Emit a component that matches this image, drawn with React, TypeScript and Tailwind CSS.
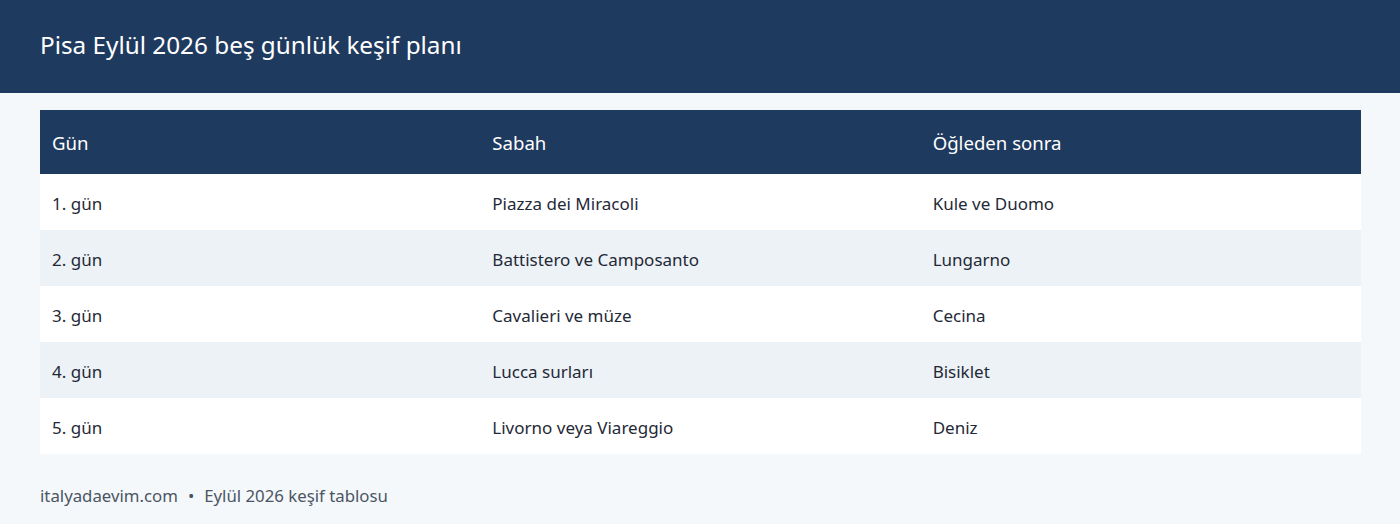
const rows = [
  ['1. gün', 'Piazza dei Miracoli', 'Kule ve Duomo'],
  ['2. gün', 'Battistero ve Camposanto', 'Lungarno'],
  ['3. gün', 'Cavalieri ve müze', 'Cecina'],
  ['4. gün', 'Lucca surları', 'Bisiklet'],
  ['5. gün', 'Livorno veya Viareggio', 'Deniz'],
];

const App = () => {
  return (
    <div className="min-h-[524px] bg-[#f5f8fb] font-['Noto_Sans',sans-serif]">
      <header className="h-[93px] bg-[#1f3a5f] flex items-center px-10 pb-[3px]">
        <h1 className="text-[24.3px] text-white">Pisa Eylül 2026 beş günlük keşif planı</h1>
      </header>

      <div className="px-[40px] pt-[17px] pr-[39px]">
        <table className="w-full border-collapse table-fixed">
          <thead>
            <tr className="bg-[#1f3a5f] text-white h-[64px]">
              <th className="text-left font-normal text-[18.6px] px-3 pt-[2px]">Gün</th>
              <th className="text-left font-normal text-[18.6px] px-3 pt-[2px]">Sabah</th>
              <th className="text-left font-normal text-[18.6px] px-3 pt-[2px]">Öğleden sonra</th>
            </tr>
          </thead>
          <tbody>
            {rows.map((r, i) => (
              <tr key={i} className={`h-[56px] text-[17px] text-[#1f2937] ${i % 2 === 1 ? 'bg-[#edf2f6]' : 'bg-white'}`}>
                <td className="px-3 pt-[3px]">{r[0]}</td>
                <td className="px-3 pt-[3px]">{r[1]}</td>
                <td className="px-3 pt-[3px]">{r[2]}</td>
              </tr>
            ))}
          </tbody>
        </table>

        <p className="mt-[29px] text-[16.8px] text-[#4b5563]">
          italyadaevim.com<span className="mx-[10px]">•</span>Eylül 2026 keşif tablosu
        </p>
      </div>
    </div>
  );
};

export default App;
